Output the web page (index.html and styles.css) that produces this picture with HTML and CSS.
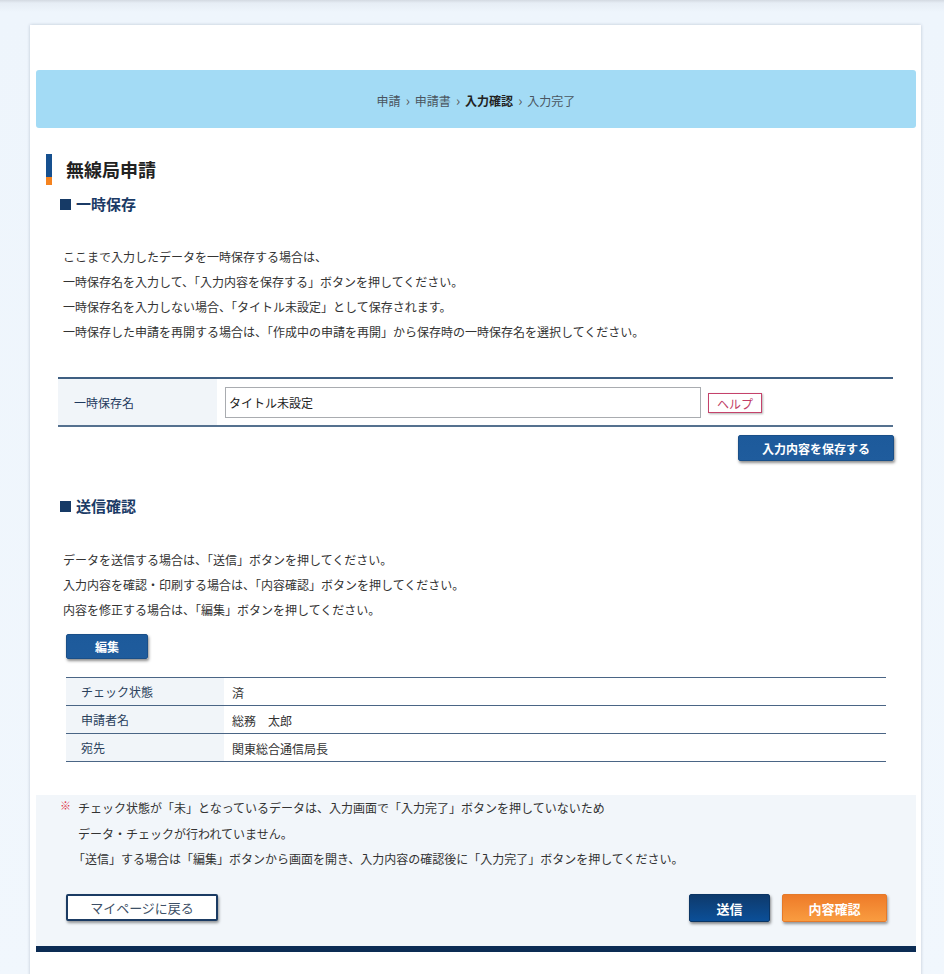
FILE: index.html
```html
<!DOCTYPE html>
<html lang="ja">
<head>
<meta charset="utf-8">
<title>無線局申請</title>
<link rel="stylesheet" href="styles.css">
</head>
<body>
<div class="card">
  <div class="breadcrumb">
    <span>申請</span><span class="sep">›</span><span>申請書</span><span class="sep">›</span><span class="current">入力確認</span><span class="sep">›</span><span>入力完了</span>
  </div>

  <h1 class="page-title">無線局申請</h1>

  <section class="section">
    <h2 class="sec-head">一時保存</h2>
    <div class="desc desc-first">
      <p>ここまで入力したデータを一時保存する場合は、</p>
      <p>一時保存名を入力して、「入力内容を保存する」ボタンを押してください。</p>
      <p>一時保存名を入力しない場合、「タイトル未設定」として保存されます。</p>
      <p>一時保存した申請を再開する場合は、「作成中の申請を再開」から保存時の一時保存名を選択してください。</p>
    </div>
    <div class="form-row">
      <div class="form-label">一時保存名</div>
      <div class="form-field">
        <input class="text-input" type="text" value="タイトル未設定">
        <button class="btn-help" type="button">ヘルプ</button>
      </div>
    </div>
    <div class="save-row">
      <button class="btn btn-blue btn-save" type="button">入力内容を保存する</button>
    </div>
  </section>

  <section class="section section-send">
    <h2 class="sec-head">送信確認</h2>
    <div class="desc desc-second">
      <p>データを送信する場合は、「送信」ボタンを押してください。</p>
      <p>入力内容を確認・印刷する場合は、「内容確認」ボタンを押してください。</p>
      <p>内容を修正する場合は、「編集」ボタンを押してください。</p>
    </div>
    <button class="btn btn-blue btn-edit" type="button">編集</button>
    <div class="info-table">
      <div class="info-row"><div class="info-label">チェック状態</div><div class="info-value">済</div></div>
      <div class="info-row"><div class="info-label">申請者名</div><div class="info-value">総務　太郎</div></div>
      <div class="info-row"><div class="info-label">宛先</div><div class="info-value">関東総合通信局長</div></div>
    </div>
  </section>

  <div class="notice">
    <div class="notice-text">
      <p><span class="mark">※</span>チェック状態が「未」となっているデータは、入力画面で「入力完了」ボタンを押していないため</p>
      <p>データ・チェックが行われていません。</p>
      <p class="bracket">「送信」する場合は「編集」ボタンから画面を開き、入力内容の確認後に「入力完了」ボタンを押してください。</p>
    </div>
    <div class="actions">
      <button class="btn btn-back" type="button">マイページに戻る</button>
      <div class="actions-right">
        <button class="btn btn-send" type="button">送信</button>
        <button class="btn btn-orange" type="button">内容確認</button>
      </div>
    </div>
  </div>
  <div class="footer-bar"></div>
</div>
</body>
</html>
```

FILE: styles.css
```css
* { box-sizing: border-box; }

html, body {
  margin: 0;
  padding: 0;
}

body {
  font-family: "Noto Sans CJK JP", "Noto Sans", sans-serif;
  font-size: 12px;
  color: #333;
  background: linear-gradient(to bottom, #d3d9e1 0, #e6edf5 3px, #eef5fc 12px, #f1f7fd 100%);
  min-height: 974px;
  overflow: hidden;
}

p { margin: 0; }

.card {
  margin: 25px 23px 0 30px;
  background: #fff;
  box-shadow: 0 0 3px rgba(40, 60, 90, 0.25);
  padding: 45px 5px 40px 6px;
  min-height: 960px;
}

.breadcrumb {
  height: 58px;
  background: #a3dbf5;
  border-radius: 3px;
  display: flex;
  align-items: center;
  justify-content: center;
  gap: 5px;
  font-size: 12px;
  color: #4a5560;
  padding-top: 2px;
}

.breadcrumb .sep { color: #555; font-size: 14px; line-height: 12px; }
.breadcrumb .current { color: #222; font-weight: bold; }

.page-title {
  margin: 26px 0 0 10px;
  height: 31px;
  line-height: 33px;
  font-size: 18px;
  font-weight: bold;
  color: #222;
  display: flex;
  align-items: center;
  gap: 14px;
}

.page-title::before {
  content: "";
  width: 6px;
  height: 31px;
  background: linear-gradient(to bottom, #16508f 0, #16508f 74%, #f5831f 74%, #f5831f 100%);
}

.section {
  padding: 0 23px 0 22px;
}

.sec-head {
  margin: 9px 0 0 2px;
  font-size: 15px;
  line-height: 20px;
  font-weight: bold;
  color: #1b3b66;
  display: flex;
  align-items: center;
  gap: 5px;
}

.sec-head::before {
  content: "";
  width: 11px;
  height: 11px;
  background: #163a66;
}

.desc p {
  line-height: 25px;
  padding-left: 5px;
}

.desc-first { margin-top: 30px; }

.form-row {
  margin-top: 33px;
  display: flex;
  border-top: 2px solid #3f5f82;
  border-bottom: 2px solid #55718f;
}

.form-label {
  width: 159px;
  background: #f1f5f9;
  color: #1f3a5e;
  padding-left: 16px;
  display: flex;
  align-items: center;
  height: 46px;
}

.form-field {
  flex: 1;
  display: flex;
  align-items: center;
  padding-left: 8px;
}

.text-input {
  width: 476px;
  height: 31px;
  border: 1px solid #a9acb0;
  font-family: inherit;
  font-size: 12px;
  color: #222;
  padding: 0 3px;
  margin: 0;
}

.btn-help {
  margin-left: 7px;
  margin-top: 2px;
  width: 54px;
  height: 20px;
  background: #fff;
  border: 1px solid #c5426b;
  color: #c03d66;
  font-family: inherit;
  font-size: 12px;
  padding: 0;
  box-shadow: 1px 1px 2px rgba(0, 0, 0, 0.3);
}

.save-row {
  display: flex;
  justify-content: flex-end;
  margin-top: 8px;
  margin-right: -1px;
}

.btn {
  font-family: inherit;
  cursor: pointer;
  border-radius: 2px;
  padding: 0;
}

.btn-blue {
  background: linear-gradient(to bottom, #1d5a9b, #1f5c9d);
  color: #fff;
  font-weight: bold;
  font-size: 12px;
  border: 1px solid #1a4f88;
  box-shadow: 1px 2px 3px rgba(0, 0, 0, 0.45);
}

.btn-save {
  width: 156px;
  height: 26px;
}

.section-send .sec-head { margin-top: 35px; }

.desc-second { margin-top: 31px; }

.btn-edit {
  margin: 12px 0 0 8px;
  width: 82px;
  height: 25px;
  display: block;
}

.info-table {
  margin: 18px 7px 0 8px;
  border-top: 1px solid #4a6585;
}

.info-row {
  display: flex;
  border-bottom: 1px solid #4a6585;
  height: 28px;
}

.info-label {
  width: 158px;
  background: #f1f5f9;
  color: #2a3f5c;
  padding-left: 15px;
  display: flex;
  align-items: center;
}

.info-value {
  flex: 1;
  padding-left: 8px;
  display: flex;
  align-items: center;
  padding-top: 2px;
}

.notice {
  margin-top: 33px;
  background: #f2f6fa;
  padding: 0 29px 24px 24px;
}

.notice-text p {
  line-height: 25px;
  padding-left: 18px;
}

.notice-text .bracket { padding-left: 13px; }

.mark {
  color: #e0394a;
  margin-left: -18px;
  width: 18px;
  display: inline-block;
  font-size: 11px;
  position: relative;
  top: -3px;
}

.actions {
  margin-top: 23px;
  display: flex;
  justify-content: space-between;
  padding-left: 6px;
}

.actions-right {
  display: flex;
  gap: 12px;
}

.btn-back {
  width: 152px;
  height: 27px;
  background: #fff;
  border: 2px solid #1b3b63;
  color: #3d4f66;
  font-size: 13px;
  box-shadow: 1px 2px 3px rgba(0, 0, 0, 0.4);
}

.btn-send {
  width: 81px;
  height: 28px;
  background: linear-gradient(to bottom, #0e3a6c, #0b4f98);
  border: 1px solid #0b3564;
  color: #fff;
  font-weight: bold;
  font-size: 13px;
  box-shadow: 1px 2px 3px rgba(0, 0, 0, 0.45);
}

.btn-orange {
  width: 105px;
  height: 28px;
  background: linear-gradient(to bottom, #ee7b29, #f99c40);
  border: 1px solid #e57a2a;
  color: #fff;
  font-weight: bold;
  font-size: 13px;
  box-shadow: 1px 2px 3px rgba(0, 0, 0, 0.4);
}

.footer-bar {
  height: 6px;
  background: #0c2c54;
}
```
